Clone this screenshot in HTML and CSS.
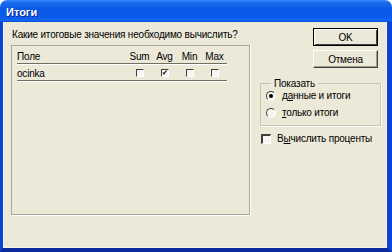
FILE: index.html
```html
<!DOCTYPE html>
<html>
<head>
    <title>Итоги</title>
    <link rel="stylesheet" href="styles.css">
</head>
<body>
    <div class="window">
        <div class="titlebar">Итоги</div>
        <div class="frame">
            <div class="left-col">
                <div class="question">Какие итоговые значения необходимо вычислить?</div>
                <div class="listbox">
                    <div class="grid-row head-row">
                        <span class="field-name">Поле</span>
                        <span class="col-head">Sum</span>
                        <span class="col-head">Avg</span>
                        <span class="col-head">Min</span>
                        <span class="col-head">Max</span>
                    </div>
                    <div class="grid-row">
                        <span class="field-name">ocinka</span>
                        <span class="cell"><span class="mini-check"></span></span>
                        <span class="cell"><span class="mini-check checked">&#10004;</span></span>
                        <span class="cell"><span class="mini-check"></span></span>
                        <span class="cell"><span class="mini-check"></span></span>
                    </div>
                </div>
            </div>
            <div class="right-col">
                <button class="btn btn-default">OK</button>
                <button class="btn">Отмена</button>
                <fieldset class="group">
                    <legend>Показать</legend>
                    <div class="option">
                        <span class="radio selected"></span>
                        <span>д<u>а</u>нные и итоги</span>
                    </div>
                    <div class="option">
                        <span class="radio"></span>
                        <span><u>т</u>олько итоги</span>
                    </div>
                </fieldset>
                <div class="option percent">
                    <span class="checkbox"></span>
                    <span>В<u>ы</u>числить проценты</span>
                </div>
            </div>
        </div>
    </div>
</body>
</html>
```
FILE: styles.css
```css
:root {
    --dialog-bg: #ECE9D8;
    --frame-blue: #0B45D8;
    --frame-dark: #0A2A9E;
    --text-color: #000000;
    --shadow-dark: #716F64;
    --shadow-light: #FFFFFF;
    --etch-color: #C8C5B5;
}

html, body {
    margin: 0;
    padding: 0;
    background: #FFFFFF;
}

body {
    font-family: 'Liberation Sans', Arial, sans-serif;
    font-size: 10px;
    letter-spacing: -0.2px;
    color: var(--text-color);
    white-space: nowrap;
}

.window {
    width: 392px;
    height: 252px;
    display: flex;
    flex-direction: column;
    border-radius: 7px 7px 0 0;
    overflow: hidden;
}

.titlebar {
    height: 22px;
    flex: none;
    padding-left: 6px;
    line-height: 24px;
    color: #FFFFFF;
    font-weight: bold;
    font-size: 11px;
    letter-spacing: 0;
    text-shadow: 1px 1px 0 #0A1E8C;
    background: linear-gradient(to bottom, #3A8BFF 0%, #1C6CF0 12%, #0A58E6 40%, #0B5CEC 80%, #1466F2 92%, #0C4BD8 100%);
}

.frame {
    flex: 1;
    display: grid;
    grid-template-columns: 239px 121px;
    column-gap: 10px;
    padding: 6px 0 0 8px;
    background: var(--dialog-bg);
    border-left: 3px solid var(--frame-blue);
    border-right: 5px solid var(--frame-blue);
    border-bottom: 4px solid var(--frame-dark);
    box-shadow: inset 1px 0 0 #F4F3EE, inset -1px -1px 0 #F4F3EE;
}

/* Left side: question and list of fields */
.left-col {
    display: flex;
    flex-direction: column;
}

.question {
    height: 13px;
    line-height: 13px;
    padding-left: 1px;
}

.listbox {
    margin-top: 4px;
    height: 165px;
    padding: 3px 22px 0 5px;
    border: 1px solid #ACA899;
    box-shadow: 1px 1px 0 var(--shadow-light);
}

.grid-row {
    display: grid;
    grid-template-columns: 1fr 25px 25px 25px 25px;
    height: 14px;
    align-items: center;
    border-bottom: 1px solid var(--shadow-dark);
    box-shadow: 0 1px 0 var(--shadow-light);
    margin-bottom: 2px;
}

.col-head {
    text-align: center;
}

.cell {
    display: flex;
    justify-content: center;
}

.mini-check {
    width: 6px;
    height: 6px;
    border-top: 1px solid #404040;
    border-left: 1px solid #404040;
    border-right: 1px solid var(--shadow-light);
    border-bottom: 1px solid var(--shadow-light);
    background: #F6F5F0;
    font-size: 7px;
    line-height: 6px;
    text-align: center;
    overflow: hidden;
}

/* Right side: buttons and options */
.right-col {
    display: flex;
    flex-direction: column;
}

.btn {
    align-self: flex-end;
    width: 65px;
    height: 18px;
    margin-right: 3px;
    padding: 0;
    font-family: inherit;
    font-size: 10px;
    letter-spacing: inherit;
    color: var(--text-color);
    background: var(--dialog-bg);
    border: 1px solid;
    border-color: var(--shadow-light) #404040 #404040 var(--shadow-light);
    box-shadow: inset -1px -1px 0 #A09E92;
}

.btn + .btn {
    margin-top: 4px;
}

.btn-default {
    border: 1px solid #000000;
    box-shadow: inset 1px 1px 0 var(--shadow-light), inset -1px -1px 0 #404040;
}

.group {
    margin: 10px 0 0 0;
    padding: 0 0 0 5px;
    height: 46px;
    border: 1px solid var(--etch-color);
    box-shadow: 1px 1px 0 var(--shadow-light);
}

.group legend {
    margin-left: 5px;
    padding: 0 3px;
    line-height: 11px;
}

.option {
    display: flex;
    align-items: center;
    gap: 6px;
    height: 17px;
}

.group .option:first-of-type {
    margin-top: -2px;
}

.radio {
    width: 8px;
    height: 8px;
    border-radius: 50%;
    border: 1px solid;
    border-color: #404040 var(--shadow-light) var(--shadow-light) #404040;
    background: #F6F5F0;
    position: relative;
}

.radio.selected::after {
    content: "";
    position: absolute;
    left: 2px;
    top: 2px;
    width: 4px;
    height: 4px;
    border-radius: 50%;
    background: #000000;
}

.percent {
    margin-top: 4px;
    margin-left: 1px;
}

.checkbox {
    width: 7px;
    height: 7px;
    border-top: 2px solid #404040;
    border-left: 2px solid #404040;
    border-right: 1px solid var(--shadow-light);
    border-bottom: 1px solid var(--shadow-light);
    background: #F6F5F0;
}
```
